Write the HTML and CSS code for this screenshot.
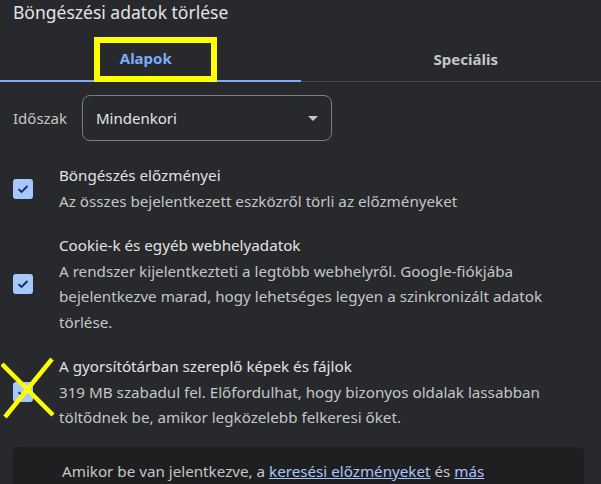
FILE: index.html
```html
<!DOCTYPE html>
<html lang="hu">
<head>
    <meta charset="UTF-8">
    <title>Böngészési adatok törlése</title>
    <link rel="stylesheet" href="styles.css">
</head>
<body>

<div class="dialog">
    <h1 class="title">Böngészési adatok törlése</h1>

    <div class="tabs">
        <div class="tab active">
            <span>Alapok</span>
            <!-- annotation box drawn over the tab -->
            <div class="mark-box"></div>
        </div>
        <div class="tab second">Speciális</div>
    </div>

    <div class="content">
        <div class="period-row">
            <label class="period-label">Időszak</label>
            <div class="select">
                <span>Mindenkori</span>
                <span class="caret"></span>
            </div>
        </div>

        <div class="option first">
            <div class="check">
                <svg width="12" height="10" viewBox="0 0 12 10"><path d="M1.5 5.2 L4.5 8 L10.5 2" fill="none" stroke="#062e6f" stroke-width="1.8"/></svg>
            </div>
            <div class="option-text">
                <div class="option-title">Böngészés előzményei</div>
                <div class="option-desc">Az összes bejelentkezett eszközről törli az előzményeket</div>
            </div>
        </div>

        <div class="option">
            <div class="check">
                <svg width="12" height="10" viewBox="0 0 12 10"><path d="M1.5 5.2 L4.5 8 L10.5 2" fill="none" stroke="#062e6f" stroke-width="1.8"/></svg>
            </div>
            <div class="option-text">
                <div class="option-title">Cookie-k és egyéb webhelyadatok</div>
                <div class="option-desc">A rendszer kijelentkezteti a legtöbb webhelyről. Google-fiókjába bejelentkezve marad, hogy lehetséges legyen a szinkronizált adatok törlése.</div>
            </div>
        </div>

        <div class="option">
            <div class="check">
                <svg width="12" height="10" viewBox="0 0 12 10"><path d="M1.5 5.2 L4.5 8 L10.5 2" fill="none" stroke="#062e6f" stroke-width="1.8"/></svg>
                <!-- annotation cross drawn over the checkbox -->
                <svg class="mark-cross" width="56" height="62" viewBox="0 0 56 62">
                    <path d="M1 7 L52 58 M51 2 L4 60" stroke="#ffff00" stroke-width="4.5" fill="none"/>
                </svg>
            </div>
            <div class="option-text">
                <div class="option-title">A gyorsítótárban szereplő képek és fájlok</div>
                <div class="option-desc">319 MB szabadul fel. Előfordulhat, hogy bizonyos oldalak lassabban töltődnek be, amikor legközelebb felkeresi őket.</div>
            </div>
        </div>

        <div class="notice">
            Amikor be van jelentkezve, a <a href="#">keresési előzményeket</a> és <a href="#">más</a>
        </div>
    </div>
</div>

</body>
</html>
```

FILE: styles.css
```css
body {
    margin: 0;
    background-color: #28292c;
    font-family: "Noto Sans", "Open Sans", sans-serif;
    color: #e3e3e3;
    overflow: hidden;
}
.dialog {
    width: 601px;
}
.title {
    margin: 0;
    padding: 0 13px;
    height: 36px;
    line-height: 25px;
    font-size: 17.5px;
    font-weight: normal;
    color: #e3e3e3;
}
.tabs {
    display: flex;
}
.tab {
    width: 50%;
    box-sizing: border-box;
    position: relative;
    height: 46px;
    display: flex;
    align-items: center;
    justify-content: center;
    font-size: 15px;
    font-weight: bold;
    color: #c4c7c5;
    border-bottom: 1px solid #47484b;
    padding-top: 1px;
}
.tab.active {
    color: #7cacf8;
    border-bottom: 2px solid #7cacf8;
    padding-top: 0;
    padding-right: 9px;
}
.tab.second {
    padding-left: 30px;
}
.mark-box {
    position: absolute;
    left: 94px;
    top: 1px;
    width: 111px;
    height: 33px;
    border: 6px solid #ffff00;
}
.content {
    padding: 0 17px 0 13px;
}
.period-row {
    display: flex;
    align-items: center;
    margin-top: 13px;
}
.period-label {
    width: 69px;
    font-size: 15px;
    color: #c4c7c5;
}
.select {
    height: 44px;
    border: 1px solid #7b7d80;
    border-radius: 8px;
    display: flex;
    align-items: center;
    justify-content: space-between;
    padding: 0 13px;
    width: 222px;
    font-size: 15px;
    color: #e3e3e3;
}
.caret {
    width: 0;
    height: 0;
    border-left: 5px solid transparent;
    border-right: 5px solid transparent;
    border-top: 5px solid #c4c7c5;
}
.option {
    display: flex;
    align-items: center;
    margin-top: 19px;
}
.option.first {
    margin-top: 22px;
}
.check {
    position: relative;
    width: 20px;
    height: 20px;
    flex-shrink: 0;
    border-radius: 3px;
    background-color: #a8c7fa;
    display: flex;
    align-items: center;
    justify-content: center;
    margin-right: 26px;
}
.mark-cross {
    position: absolute;
    left: -12px;
    top: -25px;
}
.option-text {
    max-width: 505px;
    font-size: 15.2px;
    line-height: 25.5px;
}
.option-title {
    color: #e3e3e3;
}
.option-desc {
    color: #c4c7c5;
}
.notice {
    margin-top: 16px;
    background-color: #1f1f21;
    border-radius: 6px;
    padding: 12px 16px 12px 49px;
    font-size: 15.2px;
    line-height: 25px;
    color: #c4c7c5;
}
.notice a {
    color: #a8c7fa;
}
```
